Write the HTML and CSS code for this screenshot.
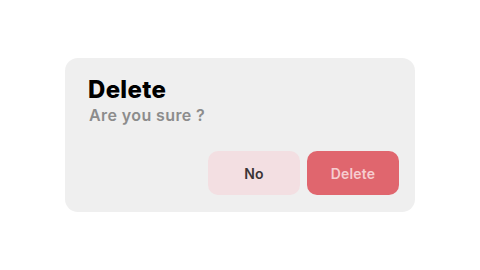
FILE: index.html
```html
<!DOCTYPE html>
<html>
<head>
<meta charset="utf-8">
<link rel="stylesheet" href="styles.css">
</head>
<body>
<div class="card">
  <div class="title">Delete</div>
  <div class="subtitle">Are you sure ?</div>
  <div class="actions">
    <button class="btn btn-no">No</button>
    <button class="btn btn-delete">Delete</button>
  </div>
</div>
</body>
</html>
```
FILE: styles.css
```css
html, body {
  margin: 0;
  padding: 0;
  background: #ffffff;
  width: 480px;
  height: 270px;
  overflow: hidden;
}
body {
  padding: 58px 0 0 65px;
  box-sizing: border-box;
  font-family: "Inter", "Open Sans", sans-serif;
}
.card {
  width: 350px;
  height: 154px;
  box-sizing: border-box;
  background: #efefef;
  border-radius: 13px;
  padding: 18px 16px 17px 23px;
  display: flex;
  flex-direction: column;
}
.title {
  font-size: 24px;
  font-weight: 800;
  line-height: 28px;
  color: #000000;
  letter-spacing: 0.3px;
}
.subtitle {
  font-size: 16px;
  font-weight: 600;
  line-height: 20px;
  color: #8c8c8c;
  margin-top: 1px;
  padding-left: 1px;
  letter-spacing: 0.4px;
}
.actions {
  margin-top: auto;
  display: flex;
  justify-content: flex-end;
  gap: 7px;
}
.btn {
  width: 92px;
  height: 44px;
  border: none;
  border-radius: 10px;
  font-family: "Inter", "Open Sans", sans-serif;
  font-size: 14px;
  font-weight: 600;
  padding: 0;
  letter-spacing: 0.2px;
}
.btn-no {
  background: #f3dfe2;
  color: #3b3536;
}
.btn-delete {
  background: #e0666e;
  color: #f6cdd0;
}
```
